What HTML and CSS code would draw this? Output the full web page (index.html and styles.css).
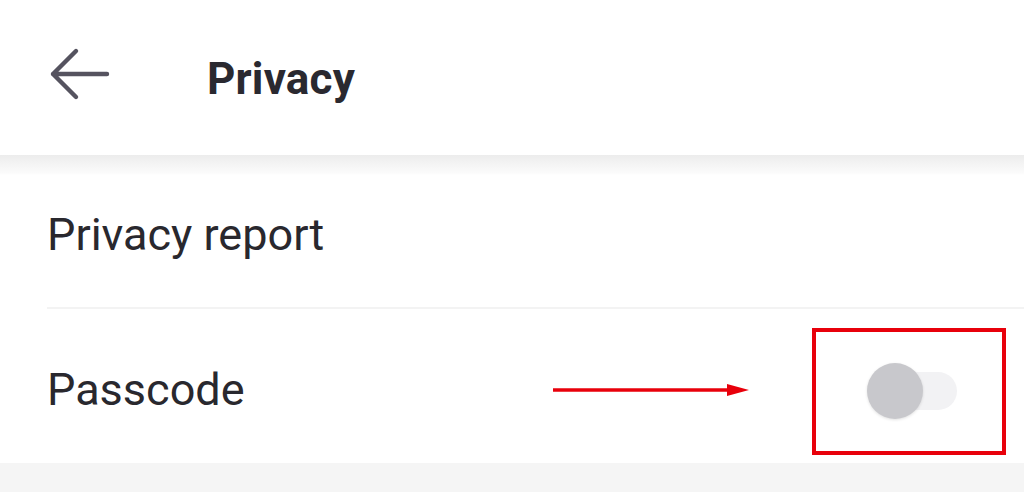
FILE: index.html
```html
<!DOCTYPE html>
<html lang="en">
<head>
<meta charset="utf-8">
<title>Privacy</title>
<link rel="stylesheet" href="styles.css">
</head>
<body>
<header class="topbar">
  <svg class="back" width="62" height="56" viewBox="0 0 62 56" aria-hidden="true">
    <path d="M59 28 H5 M28 5 L5 28 L28 51" fill="none" stroke="#55535f" stroke-width="4.4" stroke-linecap="round" stroke-linejoin="round"/>
  </svg>
  <h1 class="title">Privacy</h1>
</header>
<main class="list">
  <div class="row row-first">
    <span class="label">Privacy report</span>
  </div>
  <div class="row row-toggle">
    <span class="label">Passcode</span>
    <div class="toggle">
      <span class="track"></span>
      <span class="knob"></span>
    </div>
    <svg class="red-arrow" width="198" height="16" viewBox="0 0 198 16" aria-hidden="true">
      <line x1="0" y1="8" x2="180" y2="8" stroke="#e8000b" stroke-width="3.6"/>
      <polygon points="174,2 196,8 174,14" fill="#e8000b"/>
    </svg>
    <span class="red-box"></span>
  </div>
</main>
</body>
</html>
```

FILE: styles.css
```css
* { box-sizing: border-box; }

html, body {
  margin: 0;
  padding: 0;
  background: #f5f5f5;
  font-family: Roboto, "Noto Sans", Arial, sans-serif;
  color: #27262c;
}

body {
  width: 1024px;
  height: 492px;
  overflow: hidden;
}

.topbar {
  position: relative;
  z-index: 2;
  height: 155px;
  background: #ffffff;
  display: flex;
  align-items: center;
  padding-left: 48px;
}

.topbar::after {
  content: "";
  position: absolute;
  left: 0;
  right: 0;
  top: 155px;
  height: 20px;
  background: linear-gradient(to bottom, #ececec 0%, #f3f3f3 40%, #fbfbfb 90%, rgba(255,255,255,0) 100%);
}

.back {
  display: block;
  margin-bottom: 7px;
}

.title {
  margin: 0 0 0 97px;
  font-size: 44px;
  font-weight: 700;
  line-height: 1;
  color: #2a2930;
  letter-spacing: 0.2px;
  padding-top: 2px;
}

.list {
  background: #ffffff;
}

.row {
  margin-left: 47px;
  height: 154px;
  display: flex;
  align-items: center;
  justify-content: space-between;
}

.row-first {
  height: 154px;
  border-bottom: 2px solid #f3f3f3;
  padding-top: 6px;
}

.row-toggle {
  position: relative;
  padding-right: 67px;
}

.label {
  font-size: 45px;
  line-height: 1;
  font-weight: 400;
  color: #29282e;
}

.row-toggle .label {
  padding-top: 6px;
}

.toggle {
  position: relative;
  width: 90px;
  height: 56px;
  margin-top: 10px;
}

.track {
  position: absolute;
  left: 14px;
  right: 0;
  top: 9px;
  height: 38px;
  border-radius: 19px;
  background: #f2f2f4;
}

.knob {
  position: absolute;
  left: 0;
  top: 0;
  width: 56px;
  height: 56px;
  border-radius: 50%;
  background: #c8c8cc;
  box-shadow: 0 1px 3px rgba(0,0,0,0.12);
}

.red-arrow {
  position: absolute;
  left: 506px;
  top: 73px;
}

.red-box {
  position: absolute;
  left: 765px;
  top: 19px;
  width: 194px;
  height: 127px;
  border: 4px solid #e8000b;
}
```
